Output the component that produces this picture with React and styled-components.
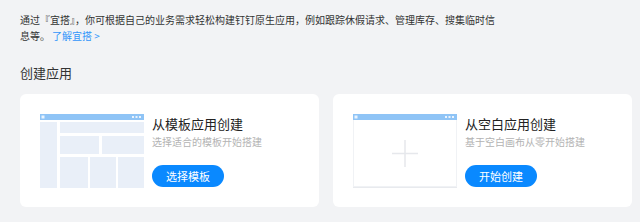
import React from "react";
import styled, { createGlobalStyle } from "styled-components";

const Global = createGlobalStyle`
  html, body { margin: 0; padding: 0; background: #f2f3f5; }
  body { font-family: "Noto Sans CJK SC", "Noto Sans", sans-serif; color: #333; }
`;

const Page = styled.div`
  padding: 12px 8px 0 20px;
  width: 640px;
  box-sizing: border-box;
`;

const Intro = styled.p`
  margin: 0;
  font-size: 10px;
  line-height: 16px;
  max-width: 480px;
  color: #333;
`;

const Link = styled.a`
  color: #3296fa;
  text-decoration: none;
  margin-left: 2px;
`;

const SectionTitle = styled.h2`
  margin: 20px 0 12px;
  font-size: 13px;
  line-height: 18px;
  font-weight: 400;
  color: #333;
`;

const Cards = styled.div`
  display: grid;
  grid-template-columns: 299px 299px;
  gap: 14px;
`;

const Card = styled.div`
  background: #fff;
  border-radius: 6px;
  padding: 20px 20px 19px 20px;
  display: flex;
  gap: 8px;
`;

const Thumb = styled.div`
  width: 104px;
  height: 74px;
  flex: none;
`;

const Info = styled.div`
  display: flex;
  flex-direction: column;
  align-items: flex-start;
`;

const Title = styled.div`
  font-size: 13px;
  line-height: 20px;
  color: #222;
`;

const Sub = styled.div`
  font-size: 10px;
  line-height: 16px;
  color: #b3b3b3;
`;

const Button = styled.button`
  margin-top: 15px;
  height: 22px;
  width: 72px;
  border: none;
  border-radius: 11px;
  background: #0a89ff;
  color: #fff;
  font-family: inherit;
  font-size: 11px;
  line-height: 22px;
  padding: 0;
  cursor: pointer;
`;

const TemplateArt = () => (
  <svg width="104" height="74" viewBox="0 0 104 74">
    <rect x="0" y="0" width="104" height="6" fill="#8fc4f6" />
    <rect x="1.5" y="1.5" width="3" height="3" fill="#eaf3fd" />
    <rect x="92" y="2" width="2" height="2" fill="#eaf3fd" />
    <rect x="95.5" y="2" width="2" height="2" fill="#eaf3fd" />
    <rect x="99" y="2" width="2" height="2" fill="#eaf3fd" />
    <rect x="0" y="8" width="17" height="66" fill="#e9eff8" />
    <rect x="20" y="8" width="84" height="11" fill="#e9eff8" />
    <rect x="20" y="22" width="39" height="18" fill="#e9eff8" />
    <rect x="62" y="22" width="42" height="18" fill="#e9eff8" />
    <rect x="20" y="43" width="28" height="31" fill="#e9eff8" />
    <rect x="50" y="43" width="26" height="31" fill="#e9eff8" />
    <rect x="78" y="43" width="26" height="31" fill="#e9eff8" />
  </svg>
);

const BlankArt = () => (
  <svg width="104" height="74" viewBox="0 0 104 74">
    <rect x="0.5" y="0.5" width="103" height="72" fill="#fff" stroke="#f0f2f5" />
    <rect x="0" y="73" width="104" height="1" fill="#e8eaee" />
    <rect x="0" y="0" width="104" height="6" fill="#8fc4f6" />
    <rect x="1.5" y="1.5" width="3" height="3" fill="#eaf3fd" />
    <rect x="92" y="2" width="2" height="2" fill="#eaf3fd" />
    <rect x="95.5" y="2" width="2" height="2" fill="#eaf3fd" />
    <rect x="99" y="2" width="2" height="2" fill="#eaf3fd" />
    <path d="M52 26 V53 M39 39.5 H65" stroke="#e6e8ec" strokeWidth="1.5" />
  </svg>
);

export default function App() {
  return (
    <>
      <Global />
      <Page>
        <Intro>
          通过『宜搭』，你可根据自己的业务需求轻松构建钉钉原生应用，例如跟踪休假请求、管理库存、搜集临时信息等。
          <Link href="#">了解宜搭 &gt;</Link>
        </Intro>
        <SectionTitle>创建应用</SectionTitle>
        <Cards>
          <Card>
            <Thumb>
              <TemplateArt />
            </Thumb>
            <Info>
              <Title>从模板应用创建</Title>
              <Sub>选择适合的模板开始搭建</Sub>
              <Button>选择模板</Button>
            </Info>
          </Card>
          <Card>
            <Thumb>
              <BlankArt />
            </Thumb>
            <Info>
              <Title>从空白应用创建</Title>
              <Sub>基于空白画布从零开始搭建</Sub>
              <Button>开始创建</Button>
            </Info>
          </Card>
        </Cards>
      </Page>
    </>
  );
}
